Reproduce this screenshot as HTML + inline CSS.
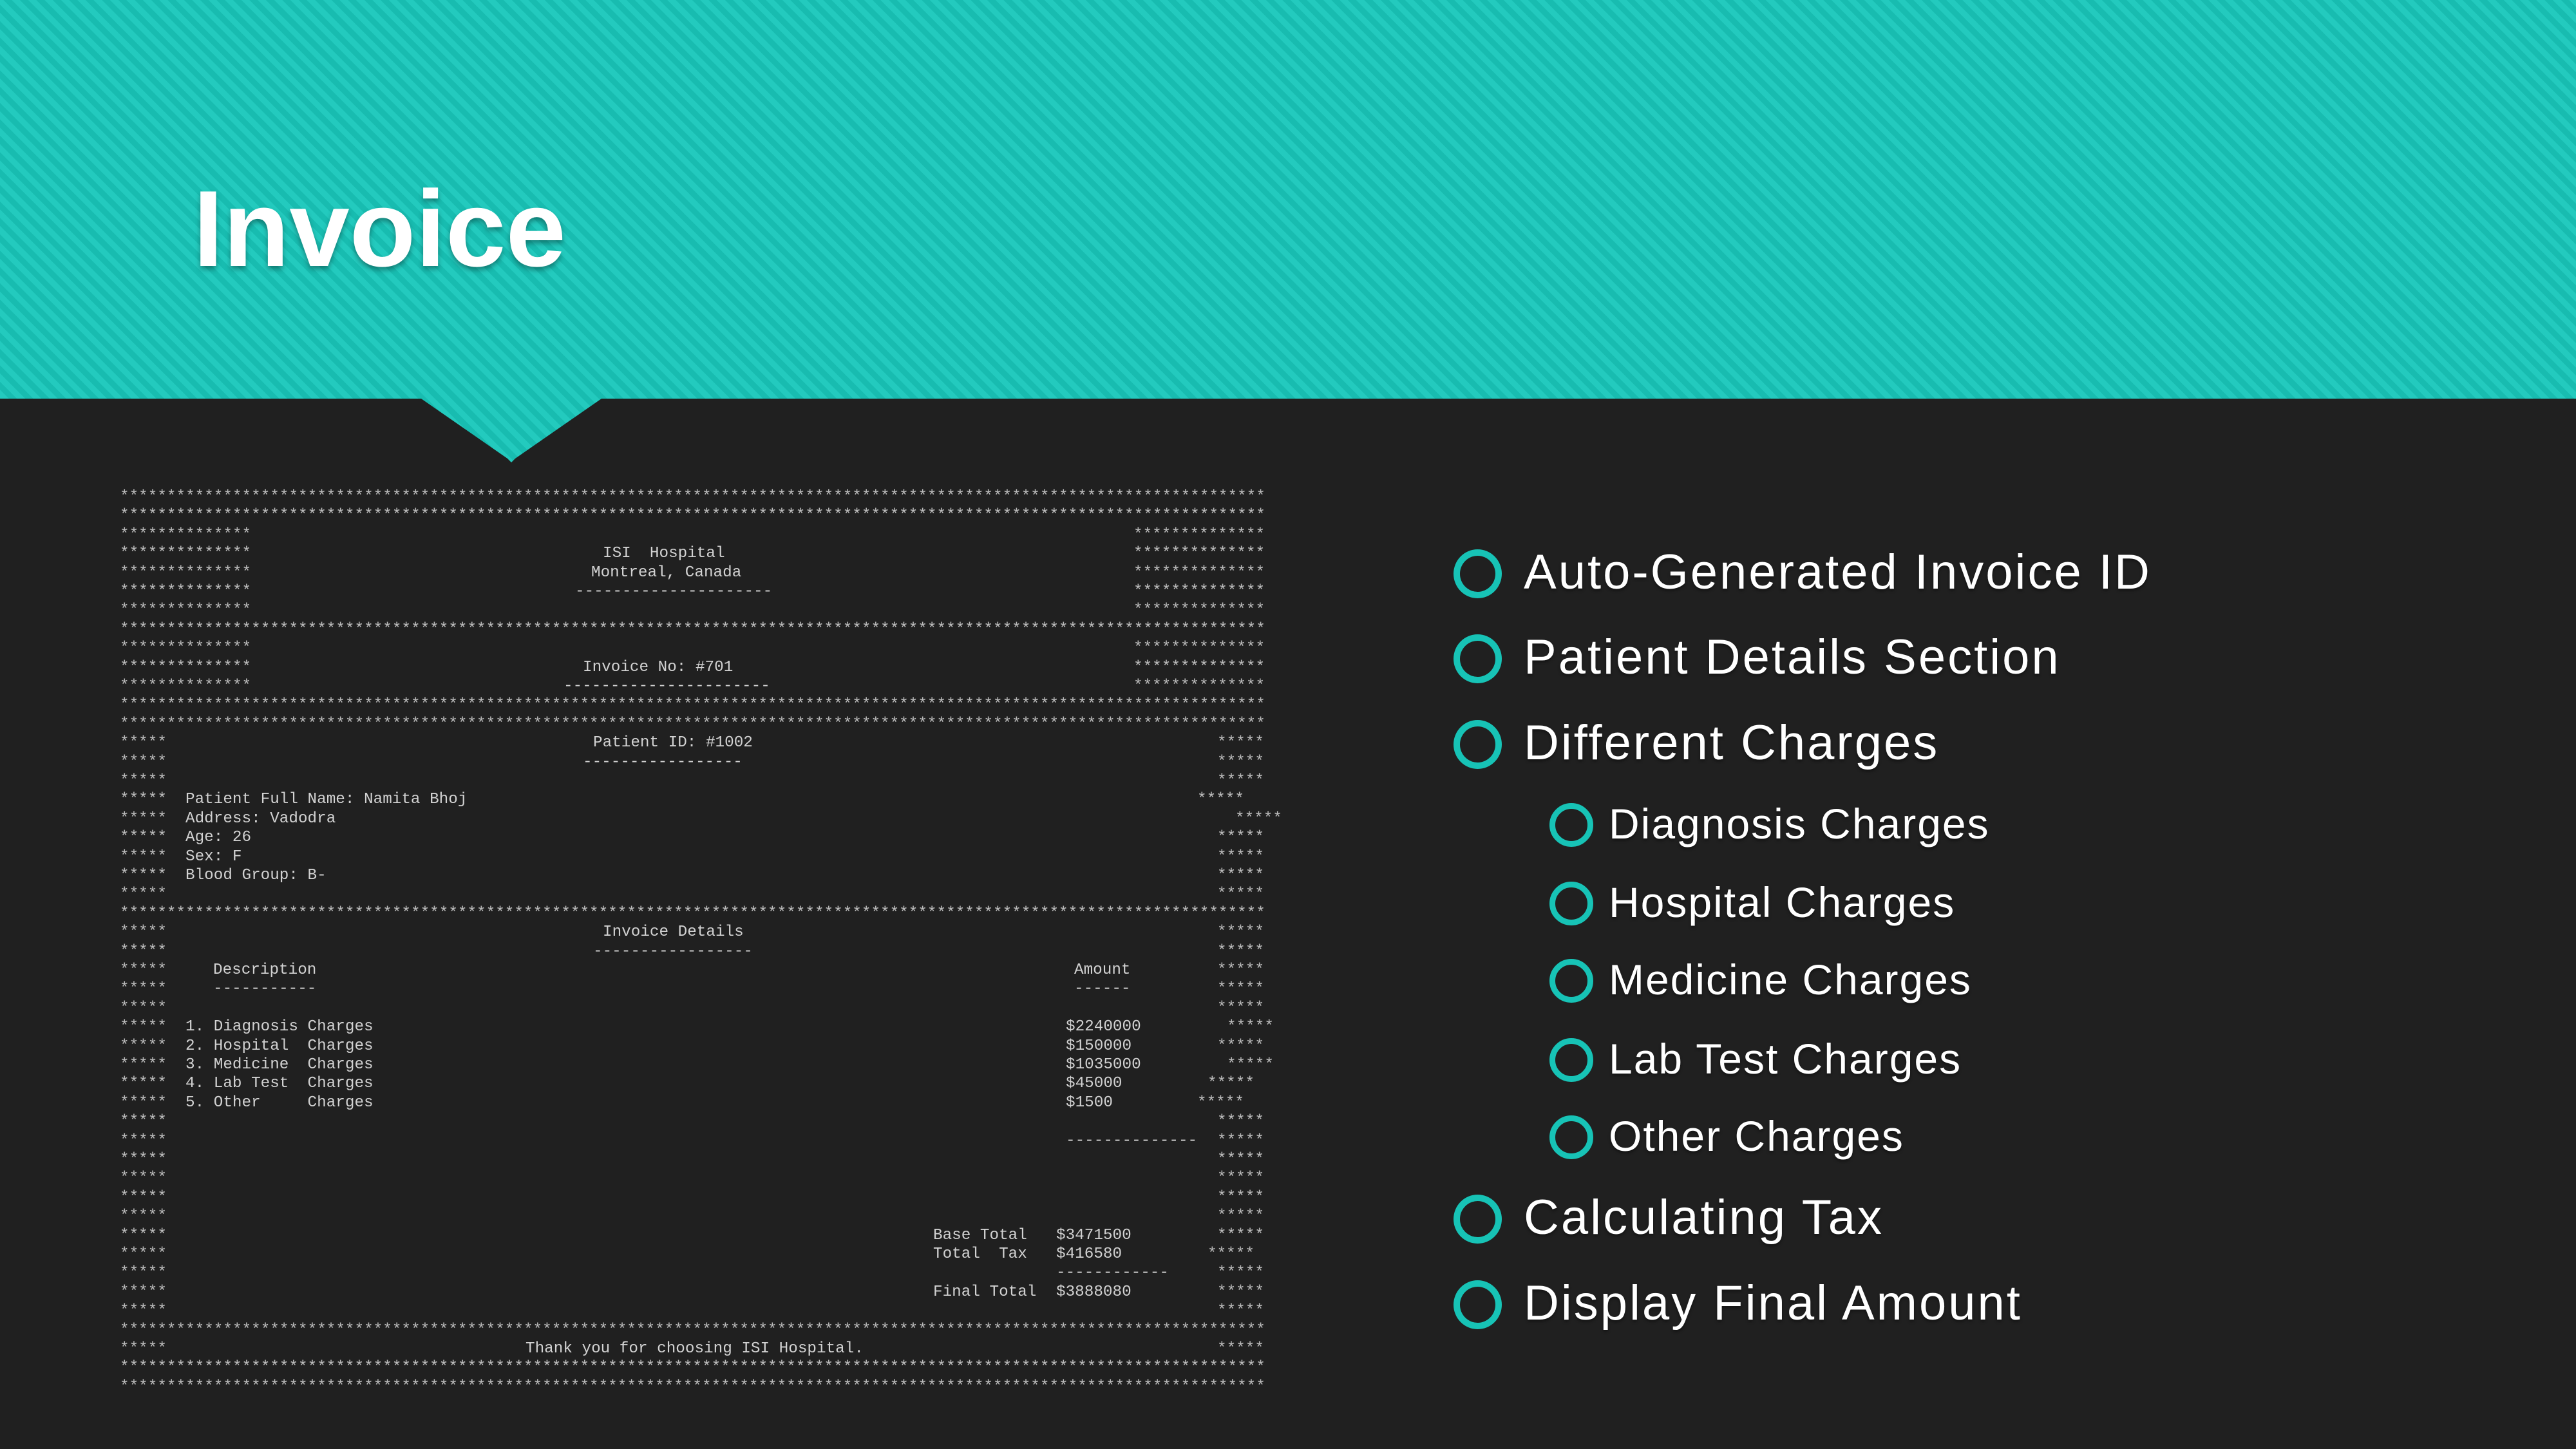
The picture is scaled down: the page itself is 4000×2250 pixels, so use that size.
<!DOCTYPE html>
<html><head><meta charset="utf-8"><style>
*{margin:0;padding:0;box-sizing:border-box}
html,body{width:4000px;height:2250px;overflow:hidden;background:#202020}
.hdr{position:absolute;left:0;top:0;width:4000px;height:720px;
background:repeating-linear-gradient(45deg,#23cabe 0 9px,#18bcb0 9px 18px);
clip-path:polygon(0 0,100% 0,100% 619px,934px 619px,800px 712px,794px 718px,788px 712px,654px 619px,0 619px)}
.title{position:absolute;left:300px;top:271px;font:bold 168px/1 "Liberation Sans",sans-serif;color:#fff;text-shadow:0 5px 8px rgba(0,0,0,.35)}
.t{position:absolute;left:186px;top:0;width:1900px;height:2250px;font-family:"Liberation Mono",monospace;font-size:24.3px;color:#d2d2d2;white-space:pre}
.t div{position:absolute;left:0;height:29px;line-height:29px;width:1900px}
.t span{position:absolute;top:0}
.s{color:#bdbdbd}
.b{position:absolute;font-family:"Liberation Sans",sans-serif;color:#fff;white-space:nowrap;text-shadow:0 3px 5px rgba(0,0,0,.4)}
.b1{left:2366px;font-size:76px;line-height:76px;letter-spacing:3px}
.b2{left:2498px;font-size:66px;line-height:66px;letter-spacing:2px}
.b1::before{content:"";position:absolute;left:-109px;top:2px;width:55px;height:56px;border:10px solid #17c3b6;border-radius:50%}
.b2::before{content:"";position:absolute;left:-92px;top:1px;width:50px;height:50px;border:9px solid #17c3b6;border-radius:50%}
</style></head><body>
<div class="hdr"></div>
<div class="title">Invoice</div>

<div class="t">
<div style="top:757px"><span class="s" style="left:0">**************************************************************************************************************************</span></div>
<div style="top:786px"><span class="s" style="left:0">**************************************************************************************************************************</span></div>
<div style="top:816px"><span class="s" style="left:0">**************</span><span class="s" style="left:1574px">**************</span></div>
<div style="top:845px"><span class="s" style="left:0">**************</span><span style="left:750px">ISI  Hospital</span><span class="s" style="left:1574px">**************</span></div>
<div style="top:875px"><span class="s" style="left:0">**************</span><span style="left:732px">Montreal, Canada</span><span class="s" style="left:1574px">**************</span></div>
<div style="top:904px"><span class="s" style="left:0">**************</span><span style="left:707px">---------------------</span><span class="s" style="left:1574px">**************</span></div>
<div style="top:933px"><span class="s" style="left:0">**************</span><span class="s" style="left:1574px">**************</span></div>
<div style="top:963px"><span class="s" style="left:0">**************************************************************************************************************************</span></div>
<div style="top:992px"><span class="s" style="left:0">**************</span><span class="s" style="left:1574px">**************</span></div>
<div style="top:1022px"><span class="s" style="left:0">**************</span><span style="left:719px">Invoice No: #701</span><span class="s" style="left:1574px">**************</span></div>
<div style="top:1051px"><span class="s" style="left:0">**************</span><span style="left:689px">----------------------</span><span class="s" style="left:1574px">**************</span></div>
<div style="top:1080px"><span class="s" style="left:0">**************************************************************************************************************************</span></div>
<div style="top:1110px"><span class="s" style="left:0">**************************************************************************************************************************</span></div>
<div style="top:1139px"><span class="s" style="left:0">*****</span><span style="left:735px">Patient ID: #1002</span><span class="s" style="left:1704px">*****</span></div>
<div style="top:1169px"><span class="s" style="left:0">*****</span><span style="left:719px">-----------------</span><span class="s" style="left:1704px">*****</span></div>
<div style="top:1198px"><span class="s" style="left:0">*****</span><span class="s" style="left:1704px">*****</span></div>
<div style="top:1227px"><span class="s" style="left:0">*****</span><span style="left:102px">Patient Full Name: Namita Bhoj</span><span class="s" style="left:1673px">*****</span></div>
<div style="top:1257px"><span class="s" style="left:0">*****</span><span style="left:102px">Address: Vadodra</span><span class="s" style="left:1732px">*****</span></div>
<div style="top:1286px"><span class="s" style="left:0">*****</span><span style="left:102px">Age: 26</span><span class="s" style="left:1704px">*****</span></div>
<div style="top:1316px"><span class="s" style="left:0">*****</span><span style="left:102px">Sex: F</span><span class="s" style="left:1704px">*****</span></div>
<div style="top:1345px"><span class="s" style="left:0">*****</span><span style="left:102px">Blood Group: B-</span><span class="s" style="left:1704px">*****</span></div>
<div style="top:1374px"><span class="s" style="left:0">*****</span><span class="s" style="left:1704px">*****</span></div>
<div style="top:1404px"><span class="s" style="left:0">**************************************************************************************************************************</span></div>
<div style="top:1433px"><span class="s" style="left:0">*****</span><span style="left:750px">Invoice Details</span><span class="s" style="left:1704px">*****</span></div>
<div style="top:1463px"><span class="s" style="left:0">*****</span><span style="left:735px">-----------------</span><span class="s" style="left:1704px">*****</span></div>
<div style="top:1492px"><span class="s" style="left:0">*****</span><span style="left:145px">Description</span><span style="left:1482px">Amount</span><span class="s" style="left:1704px">*****</span></div>
<div style="top:1521px"><span class="s" style="left:0">*****</span><span style="left:145px">-----------</span><span style="left:1482px">------</span><span class="s" style="left:1704px">*****</span></div>
<div style="top:1551px"><span class="s" style="left:0">*****</span><span class="s" style="left:1704px">*****</span></div>
<div style="top:1580px"><span class="s" style="left:0">*****</span><span style="left:102px">1. Diagnosis Charges</span><span style="left:1469px">$2240000</span><span class="s" style="left:1719px">*****</span></div>
<div style="top:1610px"><span class="s" style="left:0">*****</span><span style="left:102px">2. Hospital  Charges</span><span style="left:1469px">$150000</span><span class="s" style="left:1704px">*****</span></div>
<div style="top:1639px"><span class="s" style="left:0">*****</span><span style="left:102px">3. Medicine  Charges</span><span style="left:1469px">$1035000</span><span class="s" style="left:1719px">*****</span></div>
<div style="top:1668px"><span class="s" style="left:0">*****</span><span style="left:102px">4. Lab Test  Charges</span><span style="left:1469px">$45000</span><span class="s" style="left:1689px">*****</span></div>
<div style="top:1698px"><span class="s" style="left:0">*****</span><span style="left:102px">5. Other     Charges</span><span style="left:1469px">$1500</span><span class="s" style="left:1673px">*****</span></div>
<div style="top:1727px"><span class="s" style="left:0">*****</span><span class="s" style="left:1704px">*****</span></div>
<div style="top:1757px"><span class="s" style="left:0">*****</span><span style="left:1469px">--------------</span><span class="s" style="left:1704px">*****</span></div>
<div style="top:1786px"><span class="s" style="left:0">*****</span><span class="s" style="left:1704px">*****</span></div>
<div style="top:1815px"><span class="s" style="left:0">*****</span><span class="s" style="left:1704px">*****</span></div>
<div style="top:1845px"><span class="s" style="left:0">*****</span><span class="s" style="left:1704px">*****</span></div>
<div style="top:1874px"><span class="s" style="left:0">*****</span><span class="s" style="left:1704px">*****</span></div>
<div style="top:1904px"><span class="s" style="left:0">*****</span><span style="left:1263px">Base Total</span><span style="left:1454px">$3471500</span><span class="s" style="left:1704px">*****</span></div>
<div style="top:1933px"><span class="s" style="left:0">*****</span><span style="left:1263px">Total  Tax</span><span style="left:1454px">$416580</span><span class="s" style="left:1689px">*****</span></div>
<div style="top:1962px"><span class="s" style="left:0">*****</span><span style="left:1454px">------------</span><span class="s" style="left:1704px">*****</span></div>
<div style="top:1992px"><span class="s" style="left:0">*****</span><span style="left:1263px">Final Total</span><span style="left:1454px">$3888080</span><span class="s" style="left:1704px">*****</span></div>
<div style="top:2021px"><span class="s" style="left:0">*****</span><span class="s" style="left:1704px">*****</span></div>
<div style="top:2051px"><span class="s" style="left:0">**************************************************************************************************************************</span></div>
<div style="top:2080px"><span class="s" style="left:0">*****</span><span style="left:630px">Thank you for choosing ISI Hospital.</span><span class="s" style="left:1704px">*****</span></div>
<div style="top:2109px"><span class="s" style="left:0">**************************************************************************************************************************</span></div>
<div style="top:2139px"><span class="s" style="left:0">**************************************************************************************************************************</span></div>
</div>

<div class="b b1" style="top:851px">Auto-Generated Invoice ID</div>
<div class="b b1" style="top:983px">Patient Details Section</div>
<div class="b b1" style="top:1116px">Different Charges</div>
<div class="b b2" style="top:1246px">Diagnosis Charges</div>
<div class="b b2" style="top:1368px">Hospital Charges</div>
<div class="b b2" style="top:1488px">Medicine Charges</div>
<div class="b b2" style="top:1611px">Lab Test Charges</div>
<div class="b b2" style="top:1731px">Other Charges</div>
<div class="b b1" style="top:1853px">Calculating Tax</div>
<div class="b b1" style="top:1986px">Display Final Amount</div>
</body></html>
